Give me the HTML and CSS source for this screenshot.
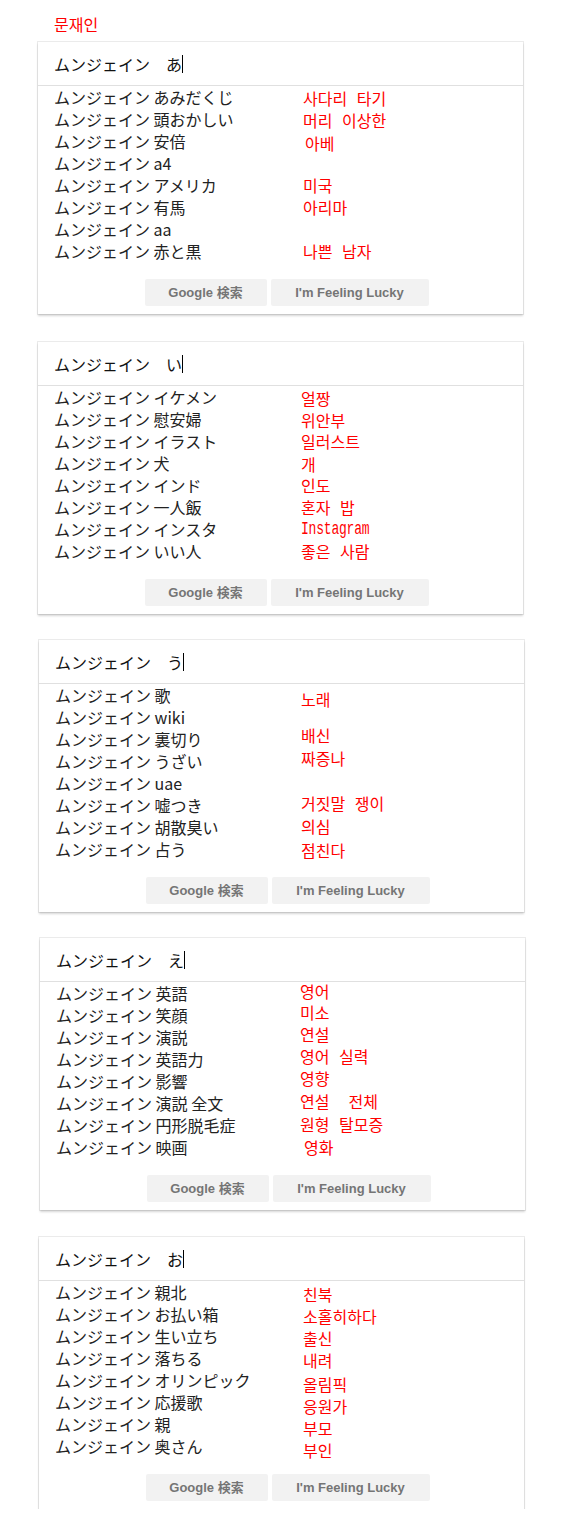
FILE: index.html
```html
<!DOCTYPE html>
<html lang="ja">
<head>
<meta charset="utf-8">
<title>문재인</title>
<link rel="stylesheet" href="styles.css">
</head>
<body>
<div class="title">문재인</div>

<div class="card c1">
  <div class="input">ムンジェイン　あ<span class="caret"></span></div>
  <div class="rows k265">
    <div class="jp">ムンジェイン あみだくじ</div><div class="ko d1">사다리 타기</div>
    <div class="jp">ムンジェイン 頭おかしい</div><div class="ko d1">머리 이상한</div>
    <div class="jp">ムンジェイン 安倍</div><div class="ko d2 i2">아베</div>
    <div class="jp">ムンジェイン a4</div><div class="ko"></div>
    <div class="jp">ムンジェイン アメリカ</div><div class="ko">미국</div>
    <div class="jp">ムンジェイン 有馬</div><div class="ko">아리마</div>
    <div class="jp">ムンジェイン aa</div><div class="ko"></div>
    <div class="jp">ムンジェイン 赤と黒</div><div class="ko">나쁜 남자</div>
  </div>
  <div class="buttons"><span class="btn b1">Google 検索</span><span class="btn b2">I'm Feeling Lucky</span></div>
</div>

<div class="card c2">
  <div class="input">ムンジェイン　い<span class="caret"></span></div>
  <div class="rows k263">
    <div class="jp">ムンジェイン イケメン</div><div class="ko d1">얼짱</div>
    <div class="jp">ムンジェイン 慰安婦</div><div class="ko d1">위안부</div>
    <div class="jp">ムンジェイン イラスト</div><div class="ko">일러스트</div>
    <div class="jp">ムンジェイン 犬</div><div class="ko d1">개</div>
    <div class="jp">ムンジェイン インド</div><div class="ko">인도</div>
    <div class="jp">ムンジェイン 一人飯</div><div class="ko">혼자 밥</div>
    <div class="jp">ムンジェイン インスタ</div><div class="ko"><span class="mono">Instagram</span></div>
    <div class="jp">ムンジェイン いい人</div><div class="ko">좋은 사람</div>
  </div>
  <div class="buttons"><span class="btn b1">Google 検索</span><span class="btn b2">I'm Feeling Lucky</span></div>
</div>

<div class="card c3">
  <div class="input">ムンジェイン　う<span class="caret"></span></div>
  <div class="rows k262">
    <div class="jp">ムンジェイン 歌</div><div class="ko d4">노래</div>
    <div class="jp">ムンジェイン wiki</div><div class="ko"></div>
    <div class="jp">ムンジェイン 裏切り</div><div class="ko u4">배신</div>
    <div class="jp">ムンジェイン うざい</div><div class="ko u3">짜증나</div>
    <div class="jp">ムンジェイン uae</div><div class="ko"></div>
    <div class="jp">ムンジェイン 嘘つき</div><div class="ko u2">거짓말 쟁이</div>
    <div class="jp">ムンジェイン 胡散臭い</div><div class="ko u1">의심</div>
    <div class="jp">ムンジェイン 占う</div><div class="ko d1">점친다</div>
  </div>
  <div class="buttons"><span class="btn b1">Google 検索</span><span class="btn b2">I'm Feeling Lucky</span></div>
</div>

<div class="card c4">
  <div class="input">ムンジェイン　え<span class="caret"></span></div>
  <div class="rows k260">
    <div class="jp">ムンジェイン 英語</div><div class="ko u2">영어</div>
    <div class="jp">ムンジェイン 笑顔</div><div class="ko u3">미소</div>
    <div class="jp">ムンジェイン 演説</div><div class="ko u3">연설</div>
    <div class="jp">ムンジェイン 英語力</div><div class="ko u3">영어 실력</div>
    <div class="jp">ムンジェイン 影響</div><div class="ko u3">영향</div>
    <div class="jp">ムンジェイン 演説 全文</div><div class="ko u2">연설  전체</div>
    <div class="jp">ムンジェイン 円形脱毛症</div><div class="ko u1">원형 탈모증</div>
    <div class="jp">ムンジェイン 映画</div><div class="ko i4">영화</div>
  </div>
  <div class="buttons"><span class="btn b1">Google 検索</span><span class="btn b2">I'm Feeling Lucky</span></div>
</div>

<div class="card c5">
  <div class="input">ムンジェイン　お<span class="caret"></span></div>
  <div class="rows k264">
    <div class="jp">ムンジェイン 親北</div><div class="ko d2">친북</div>
    <div class="jp">ムンジェイン お払い箱</div><div class="ko d2">소홀히하다</div>
    <div class="jp">ムンジェイン 生い立ち</div><div class="ko d2">출신</div>
    <div class="jp">ムンジェイン 落ちる</div><div class="ko d2">내려</div>
    <div class="jp">ムンジェイン オリンピック</div><div class="ko d4">올림픽</div>
    <div class="jp">ムンジェイン 応援歌</div><div class="ko d4">응원가</div>
    <div class="jp">ムンジェイン 親</div><div class="ko d4">부모</div>
    <div class="jp">ムンジェイン 奥さん</div><div class="ko d4">부인</div>
  </div>
  <div class="buttons"><span class="btn b1">Google 検索</span><span class="btn b2">I'm Feeling Lucky</span></div>
</div>
</body>
</html>
```

FILE: styles.css
```css
html, body {
  margin: 0;
  background: #fff;
}

body {
  padding-top: 13px;
  font-family: "Noto Sans CJK JP", "Noto Sans CJK KR", sans-serif;
}

.title {
  margin-left: 54px;
  height: 22px;
  font: 16px/22px "Noto Sans CJK KR", sans-serif;
  color: #ff0000;
}

.card {
  width: 485px;
  height: 272px;
  box-sizing: border-box;
  background: #fff;
  box-shadow: 0 2px 2px rgba(0, 0, 0, 0.16), 0 0 0 1px rgba(0, 0, 0, 0.08);
  display: flex;
  flex-direction: column;
}

.c1 { margin: 7px 0 0 38px; }
.c2 { margin: 28px 0 0 38px; }
.c3 { margin: 26px 0 0 39px; }
.c4 { margin: 26px 0 0 40px; }
.c5 { margin: 27px 0 0 39px; }

.input {
  height: 43px;
  border-bottom: 1px solid #e0e0e0;
  padding-left: 16px;
  display: flex;
  align-items: center;
  font-size: 16px;
  color: #111;
  white-space: pre;
}

.caret {
  display: inline-block;
  width: 1px;
  height: 18px;
  background: #000;
}

.rows {
  display: grid;
  grid-auto-rows: 22px;
  padding-left: 16px;
}

.k265 { grid-template-columns: 249px 1fr; }
.k263 { grid-template-columns: 247px 1fr; }
.k262 { grid-template-columns: 246px 1fr; }
.k260 { grid-template-columns: 244px 1fr; }
.k264 { grid-template-columns: 248px 1fr; }

.jp {
  font-size: 16px;
  line-height: 22px;
  color: #222;
  white-space: nowrap;
}

.ko {
  margin-top: 2px;
  font: 16px/18px "Noto Sans CJK KR", sans-serif;
  color: #ff0000;
  white-space: pre;
  word-spacing: 6px;
}

.mono {
  display: inline-block;
  vertical-align: top;
  font: 13px/13px "Liberation Mono", monospace;
  margin-top: 3px;
  transform: scaleY(1.35);
  letter-spacing: -0.2px;
}

.d1 { margin-top: 3px; }
.d2 { margin-top: 4px; }
.d4 { margin-top: 6px; }
.u1 { margin-top: 1px; }
.u2 { margin-top: 0; }
.u3 { margin-top: -1px; }
.u4 { margin-top: -2px; }
.i2 { padding-left: 2px; }
.i4 { padding-left: 4px; }

.buttons {
  display: flex;
  justify-content: center;
  gap: 4px;
  margin-top: 17px;
  padding-left: 12px;
}

.btn {
  height: 27px;
  box-sizing: border-box;
  border-radius: 2px;
  background: #f2f2f2;
  color: #757575;
  font: bold 13px/27px "Liberation Sans", "Noto Sans CJK JP", sans-serif;
  text-align: center;
}

.b1 { width: 122px; }
.b2 { width: 158px; }
```
